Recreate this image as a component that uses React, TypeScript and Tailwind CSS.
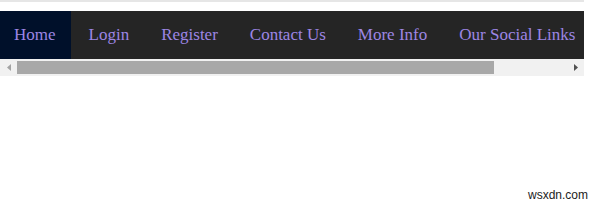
import React from 'react';

const links = ['Home', 'Login', 'Register', 'Contact Us', 'More Info', 'Our Social Links'];

export default function App() {
  return (
    <div className="w-[600px] h-[207px] bg-white relative" style={{ fontFamily: '"Liberation Serif", "Times New Roman", serif' }}>
      <div className="w-[584px] h-[2px] bg-[#e6e6e6]" />
      <div className="w-[584px] mt-[9px]">
        {/* Nav strip (scrolled to start) */}
        <div className="overflow-hidden bg-[#252525]">
          <ul className="flex w-[673px] gap-[4px] h-[48px] items-stretch">
            {links.map((l, i) => (
              <li
                key={l}
                className={`flex items-center px-[14px] text-[17px] text-[#9d86e4] whitespace-nowrap ${i === 0 ? 'bg-[#00102a] pr-[15px]' : ''}`}
              >
                {l}
              </li>
            ))}
          </ul>
        </div>
        {/* Scrollbar */}
        <div className="flex h-[17px] bg-[#f1f1f1]">
          <div className="w-[17px] flex items-center justify-center">
            <svg width="4" height="7" viewBox="0 0 4 7">
              <path d="M4 0 L0 3.5 L4 7 Z" fill="#a3a3a3" />
            </svg>
          </div>
          <div className="flex-1 flex items-center">
            <div className="h-[13px] w-[477px] bg-[#a8a8a8]" />
          </div>
          <div className="w-[17px] flex items-center justify-center">
            <svg width="4" height="7" viewBox="0 0 4 7">
              <path d="M0 0 L4 3.5 L0 7 Z" fill="#505050" />
            </svg>
          </div>
        </div>
      </div>
      <div className="absolute right-[12px] bottom-[3px] text-[12px] text-[#222]" style={{ fontFamily: '"Liberation Sans", Arial, sans-serif' }}>
        wsxdn.com
      </div>
    </div>
  );
}
